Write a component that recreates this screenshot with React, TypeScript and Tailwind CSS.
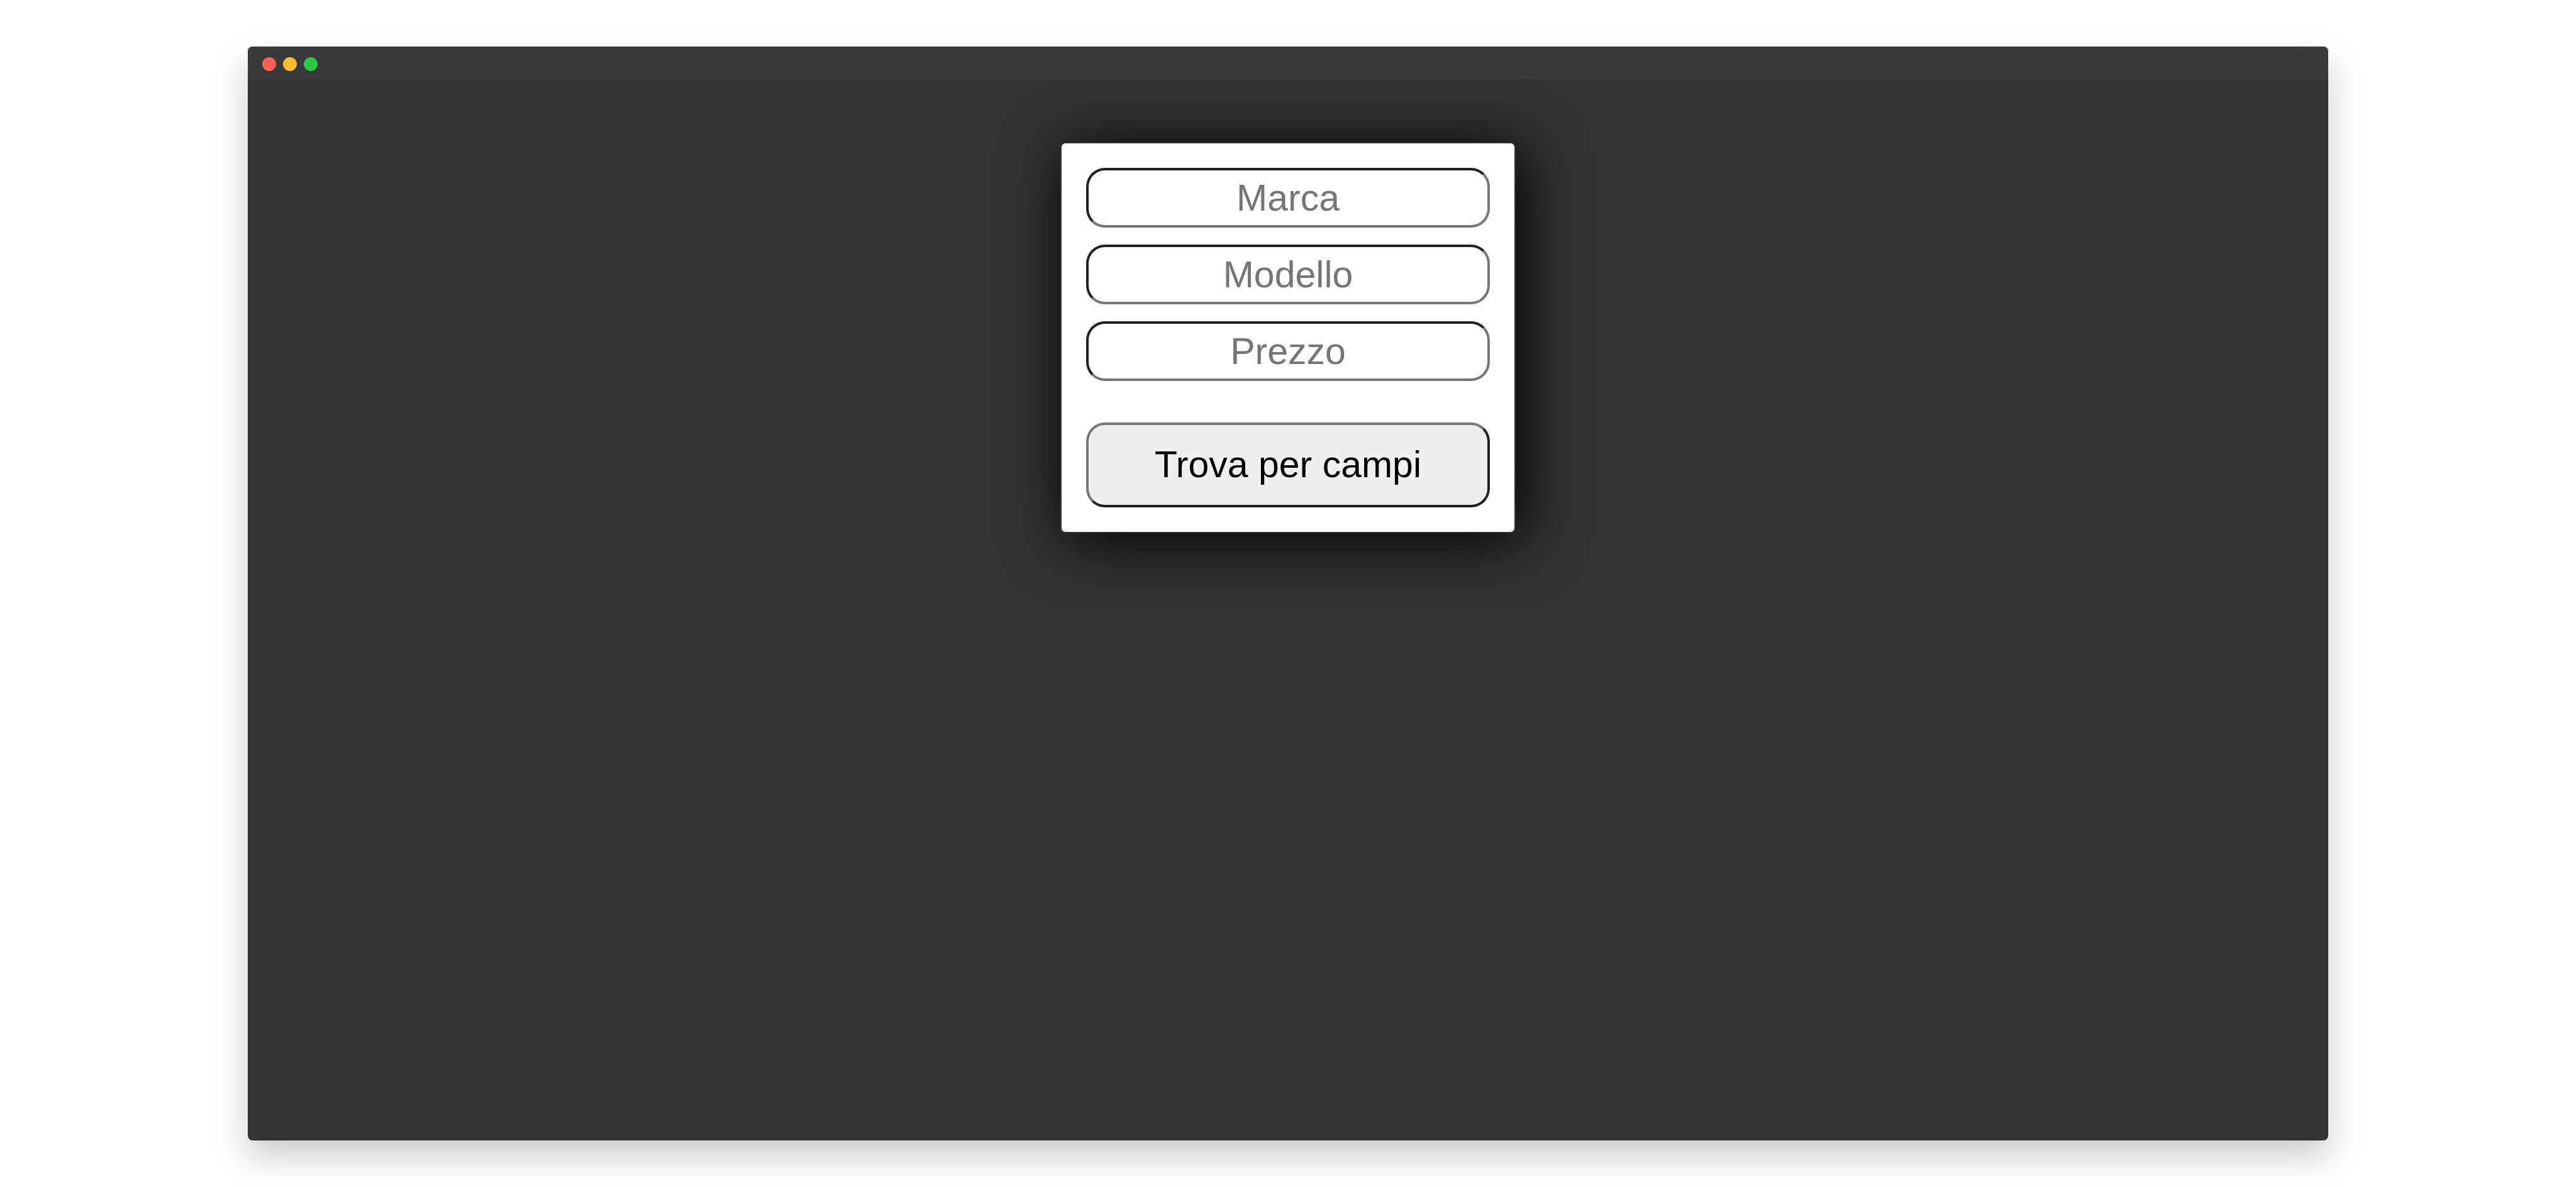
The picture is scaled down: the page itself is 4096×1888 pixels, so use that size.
const fields = [
  { name: "marca", label: "Marca" },
  { name: "modello", label: "Modello" },
  { name: "prezzo", label: "Prezzo" },
];

export default function App() {
  return (
    <div className="flex min-h-screen bg-white px-[394px] py-[74px] font-['Liberation_Sans',Arial,sans-serif]">
      <div className="flex flex-1 flex-col overflow-hidden rounded-lg bg-[#333333] shadow-[0_25px_54px_rgba(0,0,0,0.21)]">
        <header className="flex items-center gap-[11px] bg-[#37393a] px-[23px] pt-[17px] pb-[14px]">
          <span className="size-[22px] rounded-full bg-[#ff5f57]" />
          <span className="size-[22px] rounded-full bg-[#febc2e]" />
          <span className="size-[22px] rounded-full bg-[#28c840]" />
        </header>
        <main className="flex flex-1 items-start justify-center pt-[99px]">
          <form
            onSubmit={(event) => event.preventDefault()}
            className="flex w-[724px] flex-col rounded-lg border-2 border-[#333333] bg-white p-[39px] shadow-[10px_10px_98px_rgba(0,0,0,1)]"
          >
            <div className="flex flex-col gap-[27px]">
              {fields.map((field) => (
                <input
                  key={field.name}
                  type="text"
                  name={field.name}
                  aria-label={field.label}
                  placeholder={field.label}
                  className="h-[95px] w-full rounded-[30px] border-4 border-t-[#212121] border-r-[#767676] border-b-[#767676] border-l-[#212121] bg-white text-center text-[59px] text-black placeholder:text-[#757575]"
                />
              ))}
            </div>
            <button
              type="submit"
              className="mt-[66px] h-[135px] w-full rounded-[30px] border-4 border-t-[#767676] border-r-[#212121] border-b-[#212121] border-l-[#767676] bg-[#efefef] text-center text-[59px] text-black"
            >
              Trova per campi
            </button>
          </form>
        </main>
      </div>
    </div>
  );
}
